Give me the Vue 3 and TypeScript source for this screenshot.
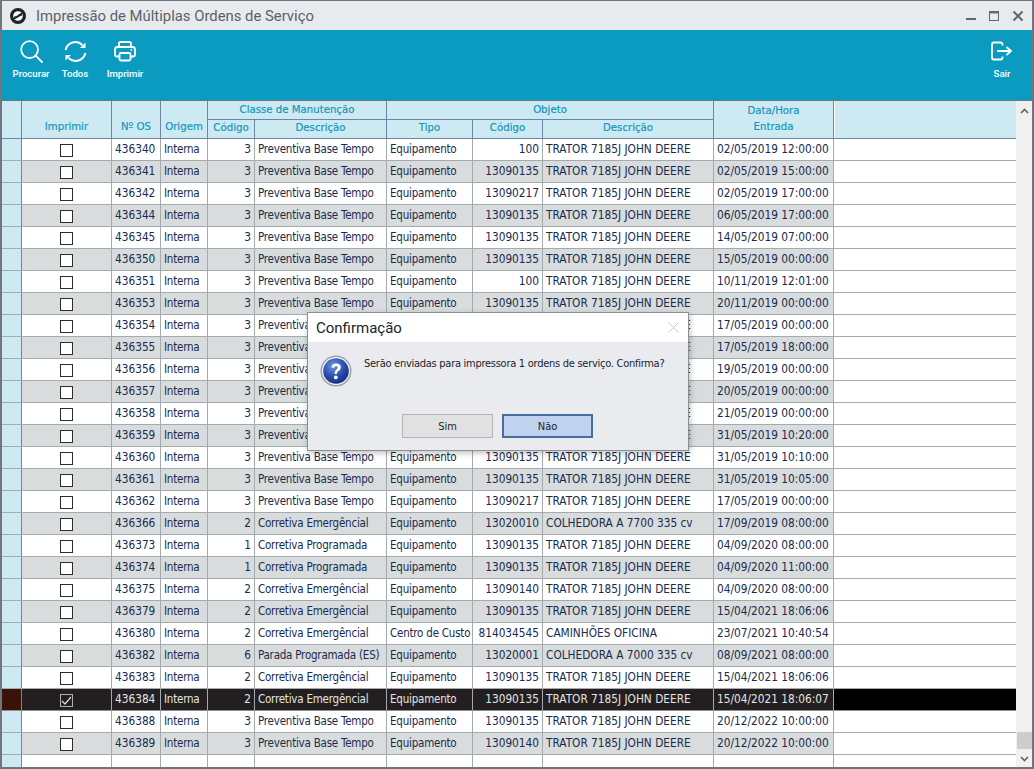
<script setup lang="ts">
interface Row { os: string; cc: string; cd: string; tipo: string; oc: string; od: string; dt: string; sel?: boolean }
const P = 'Preventiva Base Tempo'
const E = 'Corretiva Emergêncial'
const G = 'Corretiva Programada'
const T = 'TRATOR 7185J JOHN DEERE'
const Q = 'Equipamento'
const raw: [string, string, string, string, string, string][] = [
  ['436340','3',P,'100',T,'02/05/2019 12:00:00'],
  ['436341','3',P,'13090135',T,'02/05/2019 15:00:00'],
  ['436342','3',P,'13090217',T,'02/05/2019 17:00:00'],
  ['436344','3',P,'13090135',T,'06/05/2019 17:00:00'],
  ['436345','3',P,'13090135',T,'14/05/2019 07:00:00'],
  ['436350','3',P,'13090135',T,'15/05/2019 00:00:00'],
  ['436351','3',P,'100',T,'10/11/2019 12:01:00'],
  ['436353','3',P,'13090135',T,'20/11/2019 00:00:00'],
  ['436354','3',P,'13090135',T,'17/05/2019 00:00:00'],
  ['436355','3',P,'13090135',T,'17/05/2019 18:00:00'],
  ['436356','3',P,'13090135',T,'19/05/2019 00:00:00'],
  ['436357','3',P,'13090135',T,'20/05/2019 00:00:00'],
  ['436358','3',P,'13090135',T,'21/05/2019 00:00:00'],
  ['436359','3',P,'13090135',T,'31/05/2019 10:20:00'],
  ['436360','3',P,'13090135',T,'31/05/2019 10:10:00'],
  ['436361','3',P,'13090135',T,'31/05/2019 10:05:00'],
  ['436362','3',P,'13090217',T,'17/05/2019 00:00:00'],
  ['436366','2',E,'13020010','COLHEDORA A 7700 335 cv','17/09/2019 08:00:00'],
  ['436373','1',G,'13090135',T,'04/09/2020 08:00:00'],
  ['436374','1',G,'13090135',T,'04/09/2020 11:00:00'],
  ['436375','2',E,'13090140',T,'04/09/2020 08:00:00'],
  ['436379','2',E,'13090135',T,'15/04/2021 18:06:06'],
  ['436380','2',E,'814034545','CAMINHÕES OFICINA','23/07/2021 10:40:54'],
  ['436382','6','Parada Programada (ES)','13020001','COLHEDORA A 7000 335 cv','08/09/2021 08:00:00'],
  ['436383','2',E,'13090135',T,'15/04/2021 18:06:06'],
  ['436384','2',E,'13090135',T,'15/04/2021 18:06:07'],
  ['436388','3',P,'13090135',T,'20/12/2022 10:00:00'],
  ['436389','3',P,'13090140',T,'20/12/2022 10:00:00'],
]
const rows: Row[] = raw.map((r) => ({
  os: r[0], cc: r[1], cd: r[2], oc: r[3], od: r[4], dt: r[5],
  tipo: r[0] === '436380' ? 'Centro de Custo' : Q,
  sel: r[0] === '436384',
}))
</script>

<template>
  <div class="window">
    <header class="titlebar">
      <svg class="logo" width="18" height="18" viewBox="0 0 18 18">
        <circle cx="9" cy="9" r="6.4" fill="#fff" stroke="#1f2428" stroke-width="3.2" />
        <path d="M5 12.4 L5 9.4 C 8 10, 10 6.6, 13 5.6 L13 8.6 C 10 9, 8 12, 5 12.4 Z" fill="#1f2428" />
      </svg>
      <span class="title">Impressão de Múltiplas Ordens de Serviço</span>
      <span class="spacer"></span>
      <svg class="winbtn" width="62" height="14" viewBox="0 0 62 14">
        <rect x="0" y="9" width="10" height="2" fill="#5f6770" />
        <rect x="23.5" y="2.5" width="9" height="9" fill="none" stroke="#5f6770" />
        <rect x="23" y="2" width="10" height="2.4" fill="#5f6770" />
        <path d="M47.5 2.5 L56.5 11.5 M56.5 2.5 L47.5 11.5" stroke="#5f6770" stroke-width="2" fill="none" />
      </svg>
    </header>

    <nav class="toolbar">
      <button class="tool t1">
        <svg width="23" height="23" viewBox="0 0 23 23" fill="none" stroke="#fff" stroke-width="1.8">
          <circle cx="9.6" cy="9.6" r="8.4" />
          <path d="M15.6 15.6 L22 22" stroke-linecap="round" />
        </svg>
        <span>Procurar</span>
      </button>
      <button class="tool t2">
        <svg width="23" height="23" viewBox="0 0 23 23" fill="none" stroke="#fff" stroke-width="2">
          <path d="M1.6 10 A 10 10 0 0 1 18.4 5" />
          <path d="M21.4 13 A 10 10 0 0 1 4.6 18" />
          <path d="M21.5 2.5 V 8 H 16 Z" fill="#fff" stroke="none" />
          <path d="M1.5 20.5 V 15 H 7 Z" fill="#fff" stroke="none" />
        </svg>
        <span>Todos</span>
      </button>
      <button class="tool t3">
        <svg width="22" height="21" viewBox="0 0 22 21" fill="none" stroke="#fff" stroke-width="1.8">
          <path d="M5 6 V 2.5 Q 5 1 6.5 1 H 15.5 Q 17 1 17 2.5 V 6" />
          <path d="M5 15.5 H 3 Q 1 15.5 1 13.5 V 8.5 Q 1 6 3.5 6 H 18.5 Q 21 6 21 8.5 V 13.5 Q 21 15.5 19 15.5 H 17" />
          <rect x="5.5" y="12" width="11" height="7.5" rx="1.4" />
          <circle cx="17.4" cy="9" r="0.9" fill="#fff" stroke="none" />
        </svg>
        <span>Imprimir</span>
      </button>
      <span class="spacer"></span>
      <button class="tool t4">
        <svg width="22" height="20" viewBox="0 0 22 20" fill="none" stroke="#fff" stroke-width="1.8">
          <path d="M11.5 4 V 3 Q 11.5 1 9.5 1 H 3 Q 1 1 1 3 V 16 Q 1 18 3 18 H 9.5 Q 11.5 18 11.5 16 V 15" />
          <path d="M6 9.5 H 19.5 M 15.5 5.5 L 20 9.5 L 15.5 13.5" />
        </svg>
        <span>Sair</span>
      </button>
    </nav>

    <main class="content">
      <div class="grid">
        <div class="head">
          <div class="h stub"></div>
          <div class="h span2 imp">Imprimir</div>
          <div class="h span2 imp">Nº OS</div>
          <div class="h span2 imp">Origem</div>
          <div class="h group g1">Classe de Manutenção</div>
          <div class="h group g2">Objeto</div>
          <div class="h span2 dtc">Data/Hora<br />Entrada</div>
          <div class="h span2 fill"></div>
          <div class="h sub">Código</div>
          <div class="h sub">Descrição</div>
          <div class="h sub">Tipo</div>
          <div class="h sub">Código</div>
          <div class="h sub">Descrição</div>
        </div>
        <div class="body">
          <div v-for="(r, i) in rows" :key="r.os" class="row" :class="{ alt: i % 2 === 1, sel: r.sel }">
            <div class="c stubc"></div>
            <div class="c chk">
              <span class="box">
                <svg v-if="r.sel" width="11" height="10" viewBox="0 0 11 10" fill="none" stroke="#d8d8d8" stroke-width="1.2"><path d="M1 5 L4 8 L10 1" /></svg>
              </span>
            </div>
            <div class="c">{{ r.os }}</div>
            <div class="c lower">Interna</div>
            <div class="c rt">{{ r.cc }}</div>
            <div class="c lower">{{ r.cd }}</div>
            <div class="c lower">{{ r.tipo }}</div>
            <div class="c rt">{{ r.oc }}</div>
            <div class="c">{{ r.od }}</div>
            <div class="c">{{ r.dt }}</div>
            <div class="c filler"></div>
          </div>
          <div class="row last">
            <div class="c stubc"></div>
            <div class="c"></div><div class="c"></div><div class="c"></div><div class="c"></div><div class="c"></div>
            <div class="c"></div><div class="c"></div><div class="c"></div><div class="c"></div><div class="c filler"></div>
          </div>
        </div>
      </div>
      <aside class="scroll">
        <svg class="arrow" width="9" height="6" viewBox="0 0 9 6" fill="none" stroke="#606060" stroke-width="1.6"><path d="M1 5 L4.5 1.5 L8 5" /></svg>
        <span class="spacer"></span>
        <span class="thumb"></span>
        <svg class="arrow dn" width="9" height="6" viewBox="0 0 9 6" fill="none" stroke="#606060" stroke-width="1.6"><path d="M1 1 L4.5 4.5 L8 1" /></svg>
      </aside>
    </main>

    <section class="dialog">
      <div class="d-head">
        <span class="d-title">Confirmação</span>
        <svg width="11" height="11" viewBox="0 0 11 11" stroke="#c8c8c8" fill="none"><path d="M.5 .5 L10.5 10.5 M10.5 .5 L.5 10.5" /></svg>
      </div>
      <div class="d-body">
        <div class="d-msg">
          <svg class="q" width="32" height="32" viewBox="0 0 32 32">
            <defs>
              <radialGradient id="qb" cx="40%" cy="30%" r="75%">
                <stop offset="0" stop-color="#6e96e0" />
                <stop offset="0.55" stop-color="#2b50b0" />
                <stop offset="1" stop-color="#14277a" />
              </radialGradient>
            </defs>
            <circle cx="16" cy="16" r="15.5" fill="#9aa2ae" />
            <circle cx="16" cy="16" r="14" fill="#f2f4f8" />
            <circle cx="16" cy="16" r="12.8" fill="url(#qb)" />
            <path d="M11.4 12.4 Q 12 8.6 16.2 8.6 Q 20.8 8.6 20.8 12.4 Q 20.8 14.6 18.4 16 Q 16.9 16.9 16.9 19 H 14.6 Q 14.4 16 16.2 14.8 Q 17.7 13.8 17.7 12.5 Q 17.7 11 16.1 11 Q 14.5 11 14.2 12.8 Z" fill="#fff" />
            <circle cx="15.8" cy="22.4" r="1.9" fill="#fff" />
          </svg>
          <p>Serão enviadas para impressora 1 ordens de serviço. Confirma?</p>
        </div>
        <div class="d-actions">
          <button class="btn">Sim</button>
          <button class="btn def">Não</button>
        </div>
      </div>
    </section>
  </div>
</template>

<style>
html, body { margin: 0; background: #fff; }
</style>

<style scoped>
.window {
  position: relative;
  width: 1034px;
  height: 769px;
  box-sizing: border-box;
  border: 1px solid #70767c;
  border-bottom-width: 2px;
  border-left-width: 2px;
  border-right-width: 2px;
  overflow: hidden;
  background: #fff;
  font-family: "DejaVu Sans Condensed", "DejaVu Sans", sans-serif;
  font-stretch: condensed;
  display: flex;
  flex-direction: column;
}
.spacer { flex: 1; }
.titlebar {
  height: 29px;
  background: #e8ebee;
  display: flex;
  align-items: center;
  padding: 0 7px 0 7px;
  flex: none;
}
.logo { margin-right: 9px; }
.title { font-size: 14.85px; color: #5b6168; font-family: Roboto, sans-serif; font-stretch: normal; }
.winbtn { margin-right: -3px; }
.toolbar {
  height: 70px;
  background: #0c9bc0;
  display: flex;
  flex: none;
  border-bottom: 1px solid #6b7680;
  box-sizing: content-box;
  position: relative;
}
.tool {
  background: none;
  border: 0;
  padding: 10px 0 0;
  margin: 0;
  display: flex;
  flex-direction: column;
  align-items: center;
  color: #fff;
  font: 500 9.6px Roboto, sans-serif;
  height: 70px;
  box-sizing: border-box;
}
.tool svg { height: 23px; margin-bottom: 3px; }
.tool span { line-height: 16px; }
.t1 { width: 46px; margin-left: 6px; }
.t2 { width: 36px; margin-left: 3px; }
.t3 { width: 44px; margin-left: 10px; }
.t4 { width: 26px; margin-right: 17px; }
.content { flex: 1; display: flex; min-height: 0; }
.grid { width: 1014px; flex: none; overflow: hidden; }
.head, .row {
  display: grid;
  grid-template-columns: 20px 90px 49px 47px 47px 132px 86px 70px 171px 120px 182px;
}
.head {
  grid-template-rows: 19px 18px;
  height: 37px;
  background: #cdeaf3;
  border-bottom: 1px solid #6d86a8;
  box-sizing: content-box;
}
.h {
  font-size: 11.3px;
  font-weight: 400;
  color: #1596bc;
  -webkit-text-stroke: 0.2px #1596bc;
  border-right: 1px solid #6d86a8;
  display: flex;
  align-items: center;
  justify-content: center;
  text-align: center;
  box-sizing: border-box;
  line-height: 16px;
  white-space: nowrap;
  padding-bottom: 1px;
}
.stub { grid-row: 1 / span 2; grid-column: 1; border-right-width: 1px; }
.span2 { grid-row: 1 / span 2; }
.imp { align-items: flex-end; padding-bottom: 3px; }
.group { border-bottom: 1px solid #6d86a8; padding-bottom: 0; }
.g1 { grid-column: 5 / span 2; }
.g2 { grid-column: 7 / span 3; }
.dtc { grid-column: 10; grid-row: 1 / span 2; padding: 0 0 1px; }
.fill { grid-column: 11; border-right: 0; border-left: 1px solid #fff; }
.sub { grid-row: 2; padding-bottom: 3px; }
.head .sub:nth-of-type(9) { grid-column: 5; }
.row {
  height: 22px;
  box-sizing: border-box;
  border-bottom: 1px solid #a3abb1;
  background: #fff;
  color: #172b4f;
}
.row.alt { background: #d9dcdc; }
.row.alt .filler { background: #fff; }
.row.sel { background: #231f20; color: #e4e4e4; border-bottom-color: #8a9096; }
.row.sel .filler { background: #000; }
.row.sel .stubc { background: #3a1208; }
.c {
  font-size: 11.75px;
  line-height: 21px;
  height: 21px;
  padding: 0 3px;
  border-right: 1px solid #a3abb1;
  box-sizing: border-box;
  white-space: nowrap;
  overflow: hidden;
}
.c.lower { font-size: 11.5px; letter-spacing: -0.22px; }
.c.rt { text-align: right; }
.stubc { background: #cdeaf3; border-right-color: #6d86a8; padding: 0; }
.row { position: relative; }
.filler { border-right: 0; }
.chk { display: flex; align-items: center; justify-content: center; padding: 0; }
.box {
  width: 13px;
  height: 13px;
  box-sizing: border-box;
  border: 1px solid #2c2c2c;
  background: #fff;
  margin-top: 2px;
  display: flex;
  align-items: center;
  justify-content: center;
}
.row.sel .box { background: #231f20; border-color: #b0b0b0; }
.row.last { border-bottom: 0; }
.scroll {
  flex: 1;
  background: #f0f0f0;
  display: flex;
  flex-direction: column;
  align-items: center;
  padding: 7px 0 5px;
}
.thumb { width: 15px; height: 17px; background: #cdcdcd; margin-bottom: 7px; }
.dialog {
  position: absolute;
  left: 305px;
  top: 311px;
  width: 382px;
  height: 139px;
  box-sizing: border-box;
  border: 1px solid #8c8f94;
  background: #e9ebef;
  box-shadow: 1px 2px 6px rgba(0,0,0,.25);
  display: flex;
  flex-direction: column;
}
.d-head {
  height: 29px;
  background: #fff;
  display: flex;
  align-items: center;
  justify-content: space-between;
  padding: 0 9px 0 8px;
  flex: none;
}
.d-title { font: 15px Roboto, sans-serif; color: #20242a; }
.d-body { flex: 1; display: flex; flex-direction: column; }
.d-msg { display: flex; padding: 13px 0 0 12px; height: 72px; box-sizing: border-box; }
.q { flex: none; }
.d-msg p {
  margin: 1px 0 0 12px;
  font-size: 11px;
  letter-spacing: -0.27px;
  line-height: 16px;
  color: #20242a;
  white-space: nowrap;
}
.d-actions { display: flex; gap: 9px; padding-left: 94px; }
.btn {
  height: 24px;
  width: 91px;
  box-sizing: border-box;
  border: 1px solid #b4b4b4;
  background: #e1e1e1;
  font: 11px "DejaVu Sans Condensed", "DejaVu Sans", sans-serif;
  font-stretch: condensed;
  color: #20242a;
  padding: 0;
}
.btn.def { background: #bfd2ee; border: 2px solid #4a6d9c; }
</style>
